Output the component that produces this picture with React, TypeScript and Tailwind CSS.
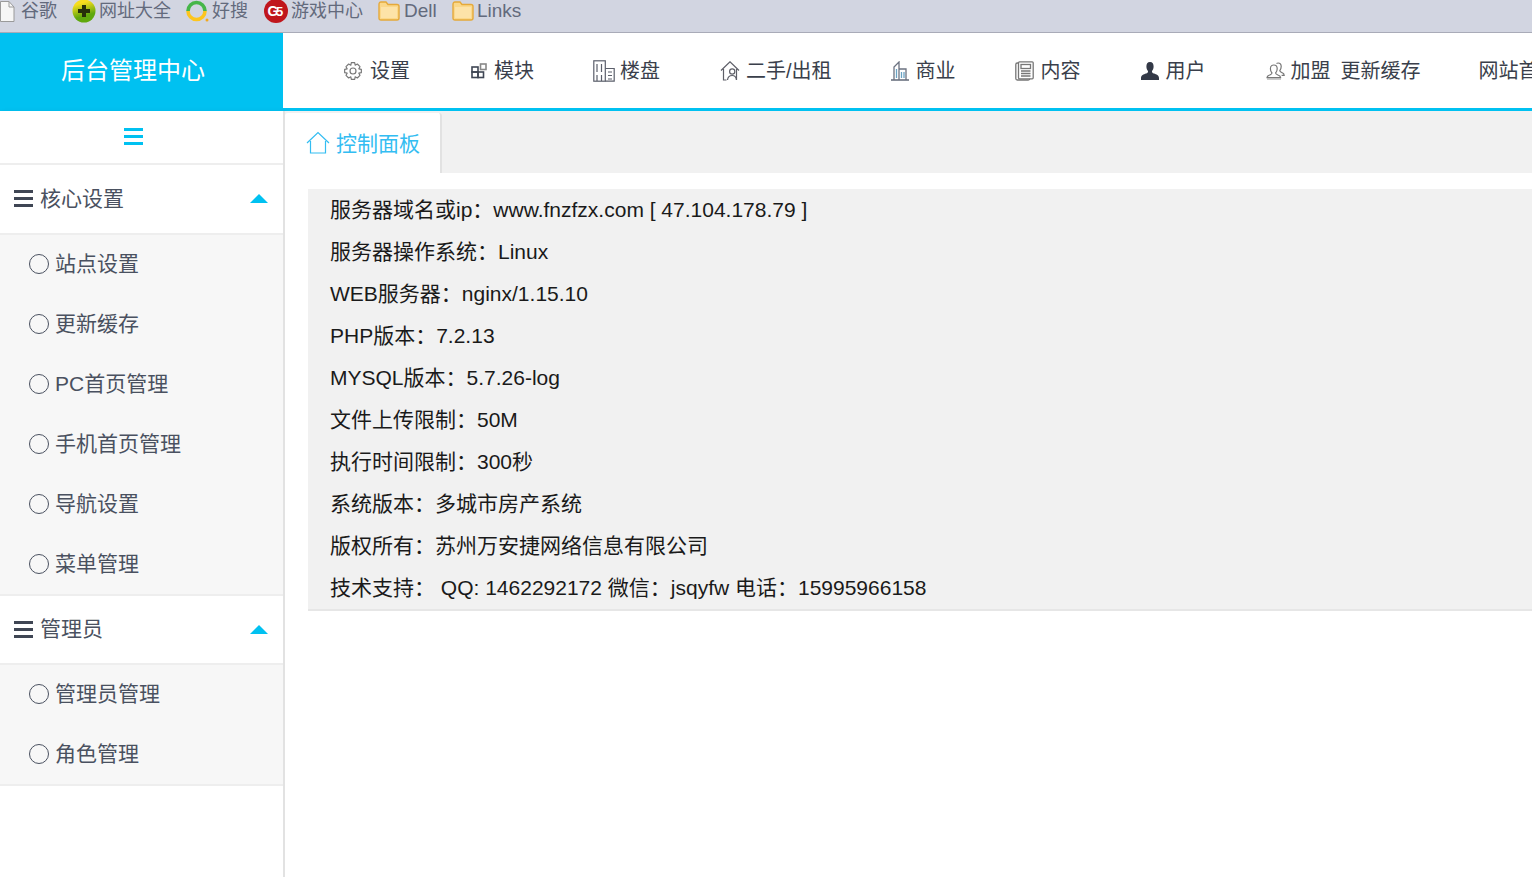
const font = { fontFamily: '"Liberation Sans", "Noto Sans CJK SC", sans-serif' };

function FolderIcon() {
  return (
    <svg width="22" height="20" viewBox="0 0 22 20" className="shrink-0">
      <path d="M1 3.5 Q1 1 3 1 H8 L10 3.5 H19 Q21 3.5 21 5.5 V17 Q21 19 19 19 H3 Q1 19 1 17 Z" fill="#fbd88a" stroke="#e5a93a" strokeWidth="1.4" />
      <path d="M3 6 H19 V17 H3 Z" fill="#fde3a8" />
    </svg>
  );
}

function Bookmarks() {
  return (
    <div className="flex h-[33px] items-start border-b border-[#a9abb8] bg-[#d2d5e1] text-[18px] leading-[22px] text-[#636a7c]">
      <div className="flex h-[22px] items-center">
        <svg width="15" height="21" viewBox="0 0 15 21" className="mr-[6px]">
          <path d="M0.5 0.5 H9 L14 6 V20.5 H0.5 Z" fill="#f6f6f6" stroke="#9a9a9a" />
          <path d="M9 0.5 V6 H14" fill="none" stroke="#9a9a9a" />
        </svg>
        <span className="w-[37px] whitespace-nowrap">谷歌</span>
        <svg width="24" height="24" viewBox="0 0 24 24" className="ml-[14px] mr-[3px]">
          <defs>
            <linearGradient id="nav360" x1="0" y1="0" x2="0.3" y2="1">
              <stop offset="0.25" stopColor="#f7dd1e" />
              <stop offset="0.8" stopColor="#5fa80d" />
            </linearGradient>
          </defs>
          <circle cx="12" cy="12" r="11.5" fill="url(#nav360)" />
          <path d="M10 6 H14 V10 H18 V14 H14 V18 H10 V14 H6 V10 H10 Z" fill="#26300a" />
        </svg>
        <span className="w-[72px] whitespace-nowrap">网址大全</span>
        <svg width="24" height="24" viewBox="0 0 24 24" className="ml-[14px] mr-[3px]">
          <path d="M3 12 A8.5 8.5 0 0 1 20 12" fill="none" stroke="#46b649" strokeWidth="3.6" />
          <path d="M3 12 A8.5 8.5 0 0 0 20 12" fill="none" stroke="#fdc51e" strokeWidth="3.6" />
          <circle cx="22" cy="21" r="1.5" fill="#f2a81d" />
        </svg>
        <span className="w-[38px] whitespace-nowrap">好搜</span>
        <svg width="24" height="24" viewBox="0 0 24 24" className="ml-[14px] mr-[3px]">
          <circle cx="12" cy="12" r="12" fill="#c0161c" />
          <text x="3.5" y="17" fontSize="14" fontWeight="700" fill="#fff" style={font}>G</text>
          <text x="12" y="17" fontSize="13" fontWeight="700" fill="#fff" style={font}>5</text>
        </svg>
        <span className="w-[73px] whitespace-nowrap">游戏中心</span>
        <div className="ml-[14px] mr-[4px]"><FolderIcon /></div>
        <span className="w-[34px] whitespace-nowrap text-[19px]">Dell</span>
        <div className="ml-[14px] mr-[3px]"><FolderIcon /></div>
        <span className="whitespace-nowrap text-[19px]">Links</span>
      </div>
    </div>
  );
}

function IconGear() {
  return (
    <svg width="20" height="20" viewBox="0 0 24 24" fill="none" stroke="#777" strokeWidth="1.4">
      <circle cx="12" cy="12" r="3.6" />
      <path d="M10 2 H14 L14.6 5 L17.2 3.6 L20.4 6.8 L19 9.4 L22 10 V14 L19 14.6 L20.4 17.2 L17.2 20.4 L14.6 19 L14 22 H10 L9.4 19 L6.8 20.4 L3.6 17.2 L5 14.6 L2 14 V10 L5 9.4 L3.6 6.8 L6.8 3.6 L9.4 5 Z" strokeLinejoin="round" />
    </svg>
  );
}
function IconModule() {
  return (
    <svg width="16" height="16" viewBox="0 0 16 16" fill="none" stroke="#3f4654" strokeWidth="1.6">
      <rect x="1" y="4" width="6" height="5" />
      <rect x="1" y="9" width="6" height="5.5" />
      <rect x="7" y="9" width="5.5" height="5.5" />
      <rect x="9.5" y="1" width="5.5" height="5.5" stroke="#888" />
    </svg>
  );
}
function IconBuildings() {
  return (
    <svg width="22" height="22" viewBox="0 0 22 22" fill="none" stroke="#5b5f6b" strokeWidth="1.2">
      <rect x="0.8" y="0.8" width="11.5" height="20.4" />
      <path d="M4 4 V12 M8.5 4 V12 M4 15 V21 M8.5 15 V21" />
      <path d="M12.3 8.5 H21.2 V21.2 H12.3 M15 12 H19 M15 15.5 H19 M15 19 H19" />
    </svg>
  );
}
function IconHouseUser() {
  return (
    <svg width="20" height="20" viewBox="0 0 20 20" fill="none" stroke="#5e5f68" strokeWidth="1.2">
      <path d="M1 9.5 L10 0.8 L19 9.5 M3.5 8 V19 H6.5 M16.5 8 V19" />
      <circle cx="12.2" cy="10.5" r="2.6" />
      <path d="M7.5 19 Q8 14.5 12.2 14.5 Q16 14.5 16.5 19" />
    </svg>
  );
}
function IconCommerce() {
  return (
    <svg width="18" height="20" viewBox="0 0 18 20" fill="none" stroke="#6b7280" strokeWidth="1.3">
      <path d="M0 19 H18" strokeWidth="1.6" />
      <path d="M3 19 V6 L8 1 V19 M8 8 H15 V19" />
      <path d="M5.5 8 V17 M10.5 11 V17 M13 11 V17" stroke="#6aa4c4" />
    </svg>
  );
}
function IconNews() {
  return (
    <svg width="19" height="20" viewBox="0 0 19 20" fill="none" stroke="#777" strokeWidth="1.3">
      <rect x="0.8" y="2" width="14" height="17" rx="1.5" />
      <rect x="3.5" y="0.8" width="14.7" height="17" rx="1" fill="#fff" />
      <rect x="6" y="3.5" width="9.5" height="4" />
      <path d="M6 10 H15.5 M6 12.5 H15.5 M6 15 H15.5" />
    </svg>
  );
}
function IconUser() {
  return (
    <svg width="18" height="18" viewBox="0 0 18 18" fill="#333947">
      <path d="M9 0 C6.4 0 5.4 2 5.4 4.4 C5.4 6.6 6.2 8 7 9 C7.2 10.4 6.6 11 5 11.6 C2.6 12.4 0 13.2 0 16 V18 H18 V16 C18 13.2 15.4 12.4 13 11.6 C11.4 11 10.8 10.4 11 9 C11.8 8 12.6 6.6 12.6 4.4 C12.6 2 11.6 0 9 0 Z" />
    </svg>
  );
}
function IconUsers() {
  return (
    <svg width="19" height="18" viewBox="0 0 19 18" fill="none" stroke="#777" strokeWidth="1.2">
      <path d="M6 11 C4.8 9.8 4.4 8.4 4.4 6.8 C4.4 4.4 5.8 3 7.8 3 C9.8 3 11.2 4.4 11.2 6.8 C11.2 8.4 10.8 9.8 9.6 11 C9.6 12 10.6 12.4 12 13 C13.6 13.6 14.6 14.2 14.6 15.6 H1 C1 14.2 2 13.6 3.6 13 C5 12.4 6 12 6 11 Z" />
      <path d="M10.5 1.4 C11.2 1 11.6 1 12 1 C14 1 15.2 2.4 15.2 4.6 C15.2 6.4 14.6 7.6 13.8 8.6 C14 9.8 15.4 10.2 16.4 10.8 C17.6 11.4 18.2 12 18.2 13.4 H15.6" />
      <path d="M1 17 H15" stroke="#aaa" />
    </svg>
  );
}

const navItems = [
  { icon: <IconGear />, label: "设置", cls: "gap-[7px] mr-[61px]" },
  { icon: <IconModule />, label: "模块", cls: "gap-[7px] mr-[59px]" },
  { icon: <IconBuildings />, label: "楼盘", cls: "gap-[5px] mr-[60px]" },
  { icon: <IconHouseUser />, label: "二手/出租", cls: "gap-[6px] mr-[59px]" },
  { icon: <IconCommerce />, label: "商业", cls: "gap-[7px] mr-[59px]" },
  { icon: <IconNews />, label: "内容", cls: "gap-[7px] mr-[60px]" },
  { icon: <IconUser />, label: "用户", cls: "gap-[7px] mr-[60px]" },
];

function TopNav() {
  return (
    <div className="flex h-[78px]">
      <div className="flex w-[283px] shrink-0 items-center justify-center bg-[#00c1f1] pb-[2px] pr-[17px] text-[24px] text-white">
        后台管理中心
      </div>
      <div className="flex h-[78px] min-w-0 flex-1 items-center overflow-hidden border-b-[3px] border-[#00c1f1] bg-white pl-[60px] text-[20px] text-[#3a3f4b]">
        {navItems.map((item) => (
          <div key={item.label} className={`flex shrink-0 items-center ${item.cls}`}>
            {item.icon}
            <span className="whitespace-nowrap">{item.label}</span>
          </div>
        ))}
        <div className="flex shrink-0 items-center gap-[6px]">
          <IconUsers />
          <span className="whitespace-nowrap">加盟</span>
        </div>
        <span className="ml-[10px] mr-[58px] shrink-0 whitespace-nowrap">更新缓存</span>
        <span className="shrink-0 whitespace-nowrap">网站首页</span>
      </div>
    </div>
  );
}

function Hamburger({ className }: { className: string }) {
  return (
    <div className={`flex w-[19px] flex-col gap-[4px] ${className}`}>
      <div className="h-[3px] bg-current" />
      <div className="h-[3px] bg-current" />
      <div className="h-[3px] bg-current" />
    </div>
  );
}

function MenuGroup({ title, items, height }: { title: string; items: string[]; height: string }) {
  return (
    <div>
      <div className={`flex items-center border-b-2 border-[#eeeeee] bg-white pb-[1px] pl-[14px] pr-[15px] ${height}`}>
        <Hamburger className="text-[#3f4654]" />
        <span className="ml-[7px] flex-1 text-[#4a5160]">{title}</span>
        <div className="h-0 w-0 border-x-[9px] border-b-[9px] border-x-transparent border-b-[#00c1f1]" />
      </div>
      <div className="border-b-2 border-[#eeeeee] bg-[#f7f7f7]">
        {items.map((item) => (
          <div key={item} className="flex h-[60px] items-center pb-[1px] pl-[29px] first:h-[59px]">
            <div className="h-[20px] w-[20px] rounded-full border-[1.5px] border-[#4a5160]" />
            <span className="ml-[6px] text-[#4a5160]">{item}</span>
          </div>
        ))}
      </div>
    </div>
  );
}

function Sidebar() {
  return (
    <div className="w-[285px] shrink-0 border-r-2 border-[#e2e2e2] bg-white text-[21px] shadow-[2px_0_5px_rgba(0,0,0,0.05)]">
      <div className="flex h-[54px] items-center justify-center border-b-2 border-[#eeeeee] pb-[2px] pr-[17px]">
        <Hamburger className="text-[#00c1f1]" />
      </div>
      <MenuGroup
        title="核心设置"
        height="h-[70px]"
        items={["站点设置", "更新缓存", "PC首页管理", "手机首页管理", "导航设置", "菜单管理"]}
      />
      <MenuGroup title="管理员" height="h-[69px]" items={["管理员管理", "角色管理"]} />
    </div>
  );
}

const infoLines = [
  "服务器域名或ip：www.fnzfzx.com [ 47.104.178.79 ]",
  "服务器操作系统：Linux",
  "WEB服务器：nginx/1.15.10",
  "PHP版本：7.2.13",
  "MYSQL版本：5.7.26-log",
  "文件上传限制：50M",
  "执行时间限制：300秒",
  "系统版本：多城市房产系统",
  "版权所有：苏州万安捷网络信息有限公司",
  "技术支持： QQ: 1462292172 微信：jsqyfw 电话：15995966158",
];

function Content() {
  return (
    <div className="min-w-0 flex-1 bg-white">
      <div className="flex h-[62px] items-end bg-[#f1f1f1]">
        <div className="flex h-[60px] w-[157px] items-center rounded-t-[3px] border-r-2 border-[#e2e2e2] bg-white pl-[21px] pt-[1px] text-[21px] text-[#33bdf2]">
          <svg width="24" height="24" viewBox="0 0 24 24" fill="none" stroke="#33bdf2" strokeWidth="1.2" className="mr-[6px] -mt-[2px]">
            <path d="M1 12 L12 1.5 L23 12 M4.5 10 V22 H19.5 V10" />
          </svg>
          控制面板
        </div>
      </div>
      <div className="ml-[23px] mt-[16px] border-b-2 border-[#e6e6e6] bg-[#f1f1f1] pl-[22px] text-[21px] leading-[42px] text-[#1a1a1a]">
        {infoLines.map((line) => (
          <div key={line} className="h-[42px] whitespace-pre">{line}</div>
        ))}
      </div>
    </div>
  );
}

export default function App() {
  return (
    <div className="flex h-[877px] w-[1532px] flex-col overflow-hidden bg-white" style={font}>
      <Bookmarks />
      <TopNav />
      <div className="flex min-h-0 flex-1">
        <Sidebar />
        <Content />
      </div>
    </div>
  );
}
